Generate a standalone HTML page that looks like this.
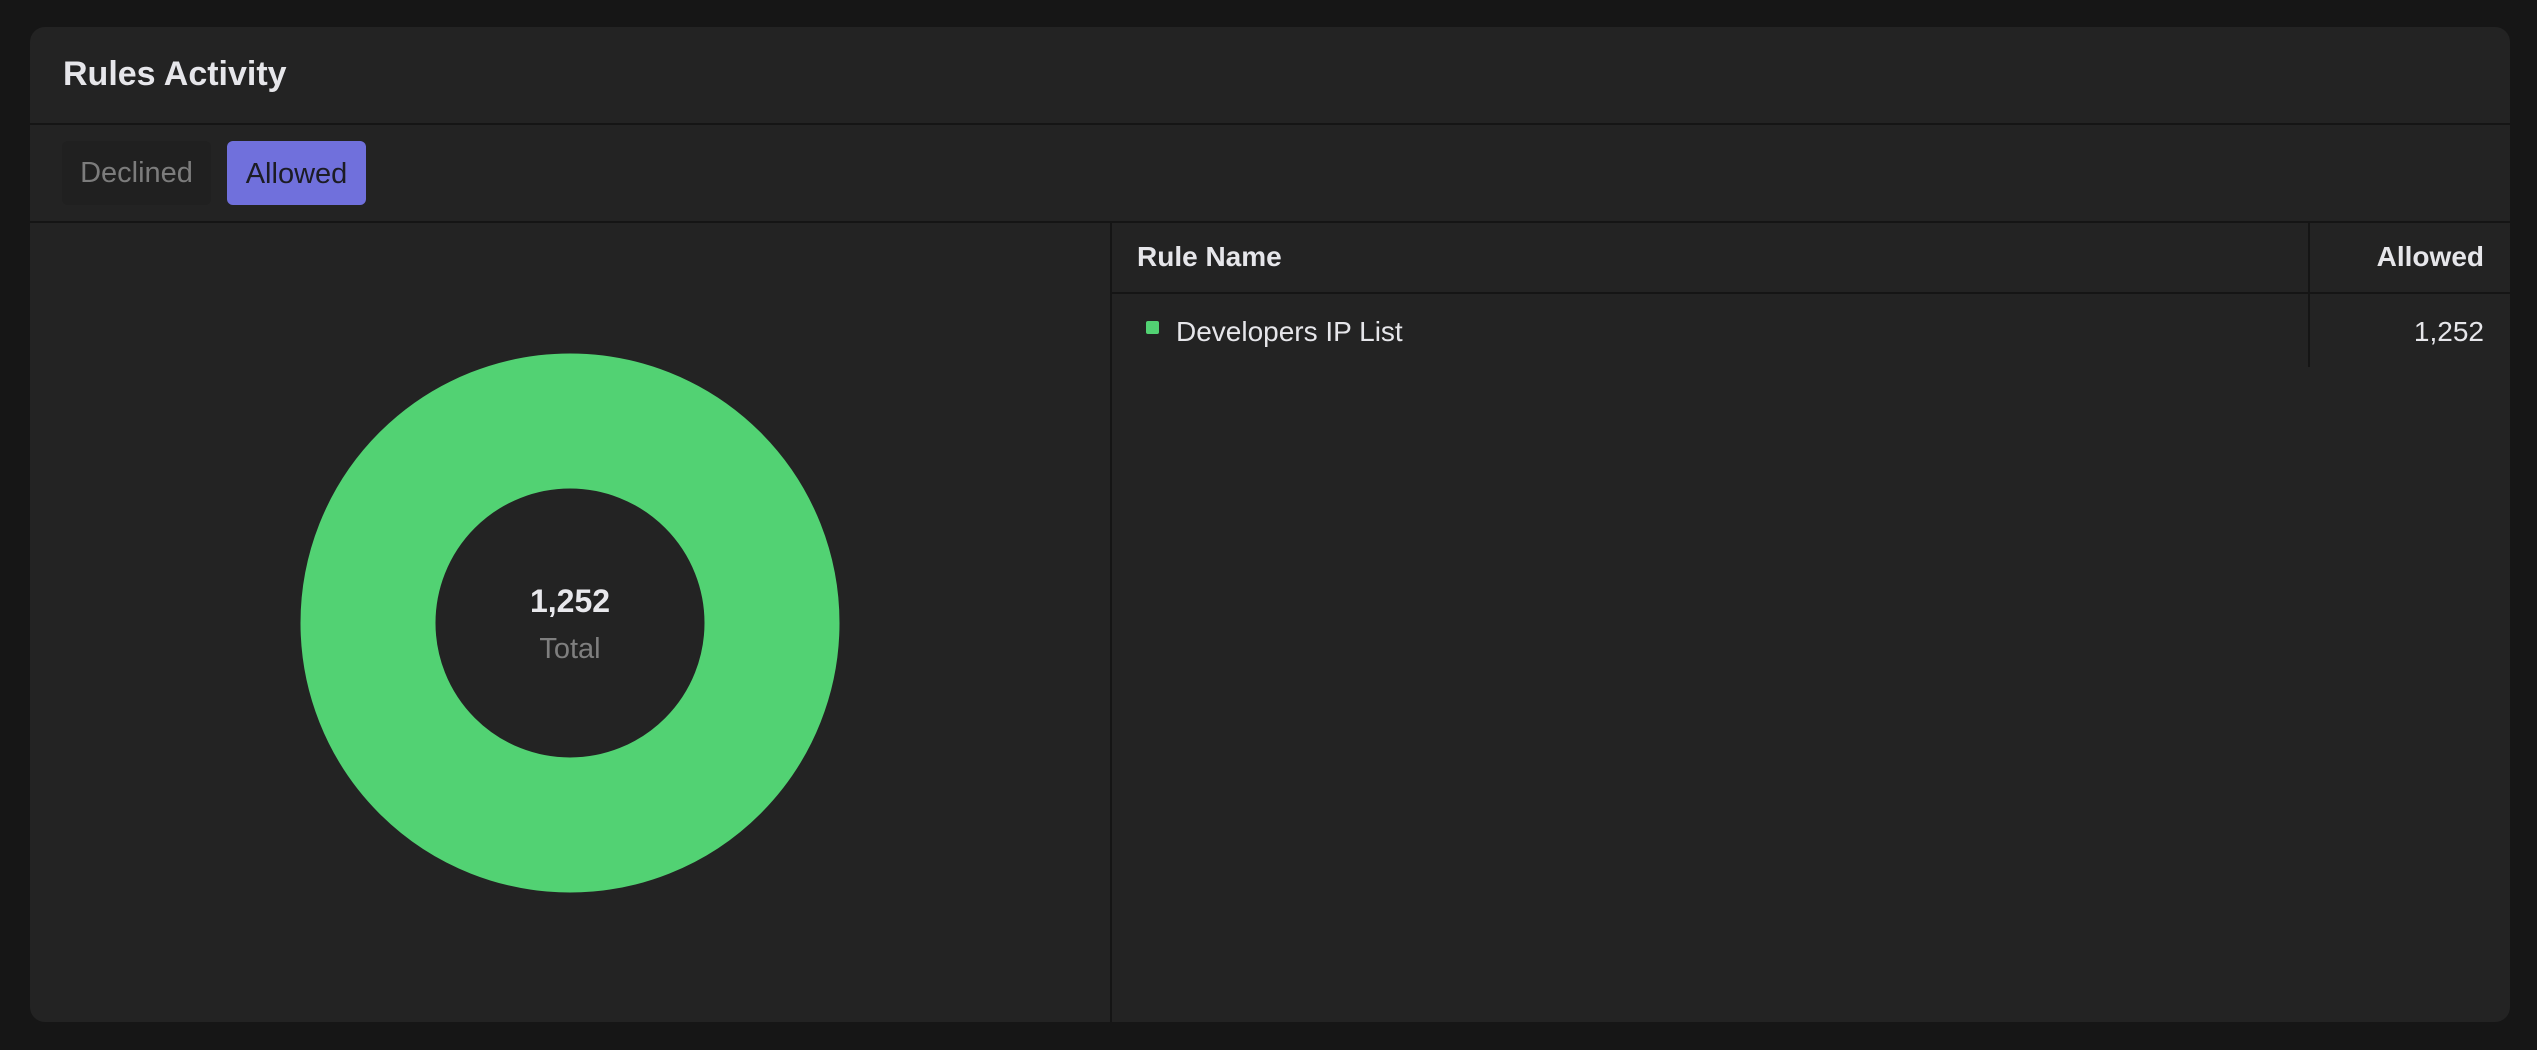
<!DOCTYPE html>
<html><head><meta charset="utf-8"><style>
*{margin:0;padding:0;box-sizing:border-box}
body{width:2537px;height:1050px;background:#161616;font-family:"Liberation Sans",sans-serif;position:relative;overflow:hidden}
.card{position:absolute;left:30px;top:27px;width:2480px;height:995px;background:#232323;border-radius:15px;overflow:hidden}
.abs{position:absolute}
.line{position:absolute;background:#151515}
</style></head><body>
<div class="card">
  <div class="abs" style="left:33px;top:27px;font-size:34px;font-weight:bold;color:#e6e6ea;line-height:40px">Rules Activity</div>
  <div class="line" style="left:0;top:96px;width:2480px;height:2px"></div>
  <div class="abs" style="left:32px;top:114px;width:149px;height:64px;background:#202020;border-radius:6px;color:#7c7c7c;font-size:29px;line-height:64px;text-align:center">Declined</div>
  <div class="abs" style="left:197px;top:114px;width:139px;height:64px;background:#7070dc;border-radius:6px;color:#1c1c24;font-size:29px;line-height:66px;text-align:center">Allowed</div>
  <div class="line" style="left:0;top:194px;width:2480px;height:2px"></div>
  <div class="line" style="left:1080px;top:196px;width:2px;height:800px"></div>
  <svg class="abs" style="left:0;top:0" width="1080" height="995">
    <circle cx="540" cy="596" r="202" fill="none" stroke="#52d273" stroke-width="135"/>
    <text x="540" y="585" text-anchor="middle" font-family="Liberation Sans" font-weight="bold" font-size="32" fill="#e8e8ec">1,252</text>
    <text x="540" y="631" text-anchor="middle" font-family="Liberation Sans" font-size="29" fill="#7f7f7f">Total</text>
  </svg>
  <div class="abs" style="left:1107px;top:214px;font-size:28px;font-weight:bold;color:#e6e6ea">Rule Name</div>
  <div class="abs" style="right:26px;top:214px;font-size:28px;font-weight:bold;color:#e6e6ea">Allowed</div>
  <div class="line" style="left:1082px;top:265px;width:1398px;height:2px"></div>
  <div class="line" style="left:2278px;top:196px;width:2px;height:144px"></div>
  <div class="abs" style="left:1116px;top:294px;width:13px;height:13px;background:#52d273;border-radius:2px"></div>
  <div class="abs" style="left:1146px;top:289px;font-size:28px;color:#e6e6ea">Developers IP List</div>
  <div class="abs" style="right:26px;top:289px;font-size:28px;color:#e6e6ea">1,252</div>
</div>
</body></html>
